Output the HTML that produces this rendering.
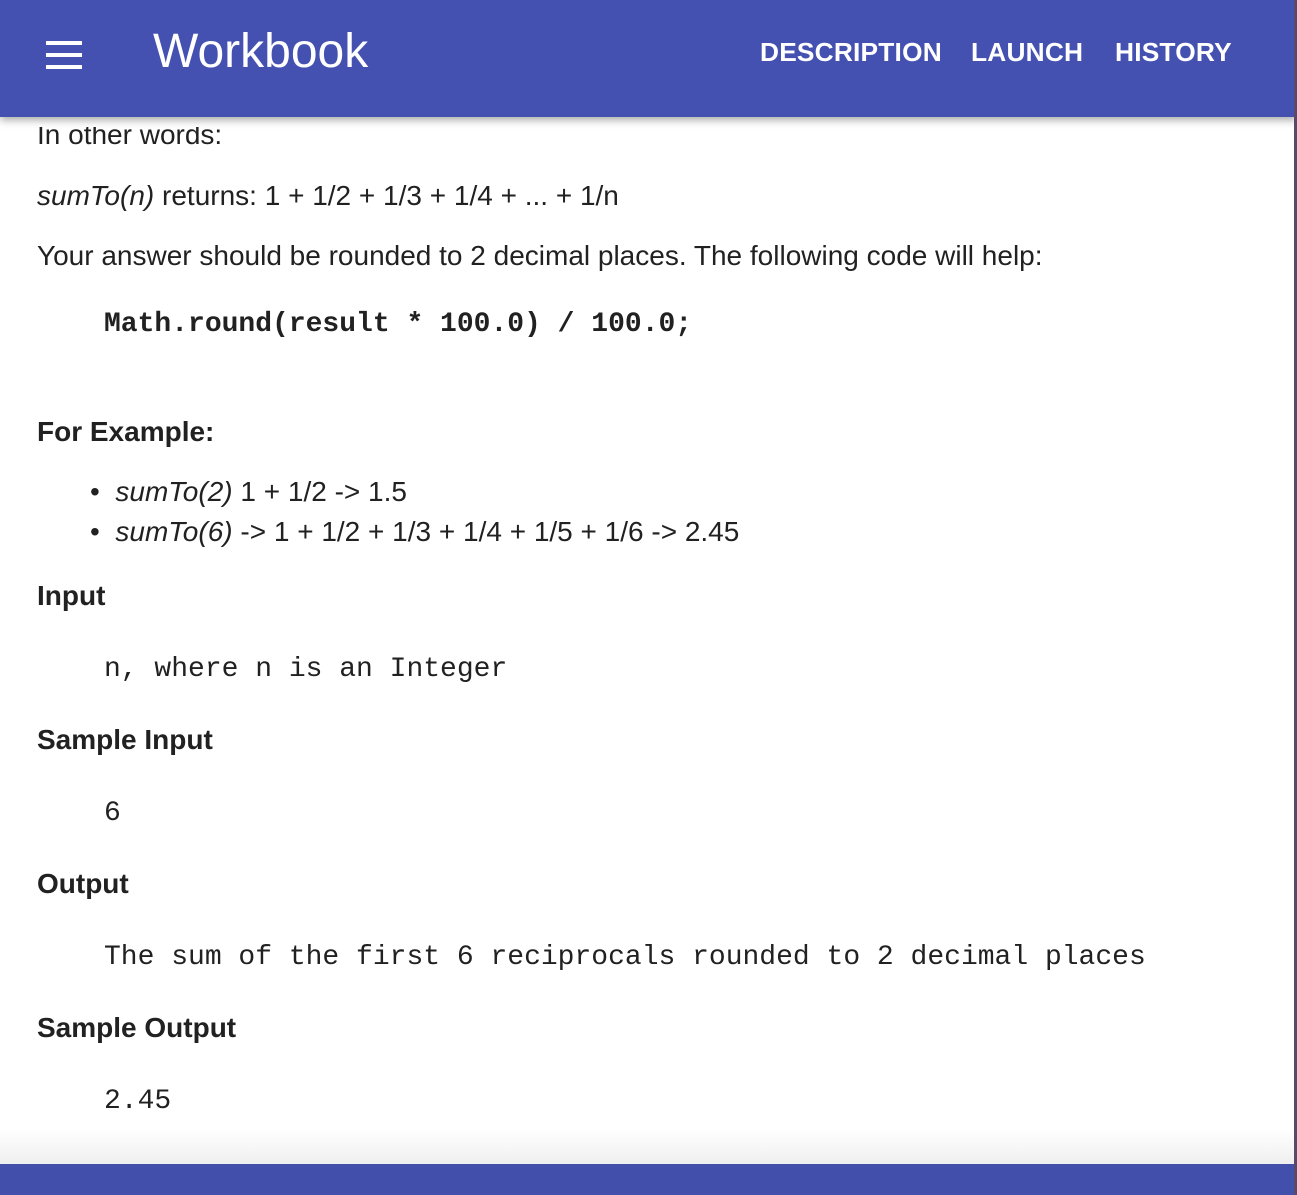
<!DOCTYPE html>
<html><head><meta charset="utf-8"><style>
html,body{margin:0;padding:0;width:1297px;height:1195px;overflow:hidden;background:#fff;font-family:"Liberation Sans",Arial,sans-serif;color:#212121}
.hdr{position:absolute;left:0;top:0;width:1297px;height:117px;background:#4451b0;box-shadow:0 3px 8px rgba(0,0,0,.35);z-index:2}
.strip{position:absolute;left:0;top:117px;width:1294px;height:10px;background:#fff;z-index:1}
.burger{position:absolute;left:46px;top:41px;width:36px}
.burger div{height:4px;background:#fff;margin-bottom:8px}
.title{position:absolute;left:153px;top:24px;color:#fff;font-size:48px}
.nav{position:absolute;top:37px;color:#fff;font-size:26.3px;font-weight:bold;letter-spacing:.2px}
.c{position:absolute;left:37px;font-size:28px;white-space:nowrap}
.b{font-weight:bold}
.m{position:absolute;left:104px;font-family:"Liberation Mono",monospace;font-size:28px;white-space:nowrap}
.foot{position:absolute;left:0;top:1164px;width:1297px;height:31px;background:#4250ac}
.fade{position:absolute;left:0;top:1130px;width:1297px;height:34px;background:linear-gradient(#fff,#efefef)}
.edge{position:absolute;left:1294px;top:0;width:3px;height:1195px;background:#5a4a6a;z-index:3}
</style></head><body>
<div class="hdr">
<div class="burger"><div></div><div></div><div></div></div>
<div class="title">Workbook</div>
<div class="nav" style="left:760px">DESCRIPTION</div>
<div class="nav" style="left:971px">LAUNCH</div>
<div class="nav" style="left:1115px">HISTORY</div>
</div>
<div class="strip"></div>
<div class="c" style="top:119px">In other words:</div>
<div class="c" style="top:180px"><i>sumTo(n)</i> returns: 1 + 1/2 + 1/3 + 1/4 + ... + 1/n</div>
<div class="c" style="top:240px">Your answer should be rounded to 2 decimal places. The following code will help:</div>
<div class="m b" style="top:309px">Math.round(result * 100.0) / 100.0;</div>
<div class="c b" style="top:416px">For Example:</div>
<div class="c" style="top:476px;left:90px">•&nbsp; <i>sumTo(2)</i> 1 + 1/2 -&gt; 1.5</div>
<div class="c" style="top:516px;left:90px">•&nbsp; <i>sumTo(6)</i> -&gt; 1 + 1/2 + 1/3 + 1/4 + 1/5 + 1/6 -&gt; 2.45</div>
<div class="c b" style="top:580px">Input</div>
<div class="m" style="top:654px">n, where n is an Integer</div>
<div class="c b" style="top:724px">Sample Input</div>
<div class="m" style="top:798px">6</div>
<div class="c b" style="top:868px">Output</div>
<div class="m" style="top:942px">The sum of the first 6 reciprocals rounded to 2 decimal places</div>
<div class="c b" style="top:1012px">Sample Output</div>
<div class="m" style="top:1086px">2.45</div>
<div class="fade"></div>
<div class="foot"></div>
<div class="edge"></div>
</body></html>
